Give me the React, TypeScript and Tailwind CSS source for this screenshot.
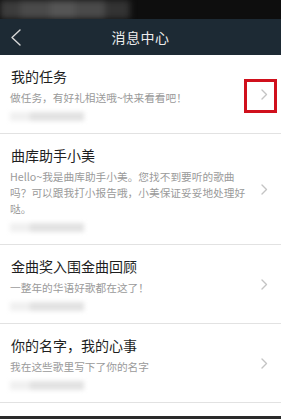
import React from 'react'

type Msg = {
  title: string
  lines: string[]
}

const messages: Msg[] = [
  { title: '我的任务', lines: ['做任务，有好礼相送哦~快来看看吧！'] },
  {
    title: '曲库助手小美',
    lines: [
      'Hello~我是曲库助手小美。您找不到要听的歌曲',
      '吗？可以跟我打小报告哦，小美保证妥妥地处理好',
      '哒。',
    ],
  },
  { title: '金曲奖入围金曲回顾', lines: ['一整年的华语好歌都在这了！'] },
  { title: '你的名字，我的心事', lines: ['我在这些歌里写下了你的名字'] },
  { title: '幸福陪你度过寂寞的每一天', lines: ['听一首歌，想一个人'] },
]

const Chevron = () => (
  <svg width="7" height="11" viewBox="0 0 7 11" fill="none">
    <polyline points="1,1 5.5,5.5 1,10" stroke="#c4c4c4" strokeWidth="1.4" strokeLinecap="round" strokeLinejoin="round" />
  </svg>
)

const MessageRow = ({ msg, marked }: { msg: Msg; marked?: boolean }) => (
  <div className="relative flex items-center border-b border-[#e2e2e2] pl-[10px] pr-[13px] pt-[11px] pb-[11px]">
    <div className="flex-1 min-w-0">
      <div className="pl-[1px] text-[14px] leading-[20px] text-[#1e1e1e]">{msg.title}</div>
      <div className="mt-[4px] text-[10.7px] leading-[16px] text-[#9a9a9a]">
        {msg.lines.map((l, i) => (
          <div key={i} className="whitespace-nowrap">{l}</div>
        ))}
      </div>
      {/* blurred date */}
      <div className="mt-[4px] h-[12px] flex items-center">
        <div className="flex h-[9px] blur-[2px]">
          <div className="w-[20px] bg-[#f0f0f0]" />
          <div className="w-[54px] bg-[#e2e2e2]" />
        </div>
      </div>
    </div>
    <div className="shrink-0 pl-[8px]">
      <Chevron />
    </div>
    {marked && (
      <div className="absolute right-[4px] top-[24px] w-[33px] h-[34px] border-[3px] border-[#d0101c]" />
    )}
  </div>
)

export default function App() {
  return (
    <div
      className="relative w-[281px] h-[419px] overflow-hidden bg-white"
      style={{ fontFamily: '"Noto Sans CJK SC", "Noto Sans", sans-serif' }}
    >
      {/* status bar */}
      <div className="h-[19px] bg-[#0e0e0e] flex overflow-hidden">
        <div className="flex h-full blur-[3px]">
          <div className="w-[20px] bg-[#3c3c3c]" />
          <div className="w-[30px] bg-[#4a4a4a]" />
          <div className="w-[25px] bg-[#555555]" />
          <div className="w-[30px] bg-[#4a4a4a]" />
          <div className="w-[25px] bg-[#333333]" />
        </div>
      </div>
      {/* header */}
      <div className="relative h-[36px] bg-[#1d2a34] flex items-center justify-center">
        <svg className="absolute left-[10px] top-[10px]" width="12" height="17" viewBox="0 0 12 17" fill="none">
          <polyline points="10,1 2,8.5 10,16" stroke="#d8d8d8" strokeWidth="1.4" strokeLinecap="round" strokeLinejoin="round" />
        </svg>
        <span className="text-[14px] text-[#ececec] tracking-[0.5px]">消息中心</span>
      </div>
      {/* list */}
      <div>
        {messages.map((m, i) => (
          <MessageRow key={i} msg={m} marked={i === 0} />
        ))}
      </div>
      {/* bottom bar */}
      <div className="absolute left-0 right-0 bottom-0 h-[3px] bg-[#2a2a2a]" />
    </div>
  )
}
